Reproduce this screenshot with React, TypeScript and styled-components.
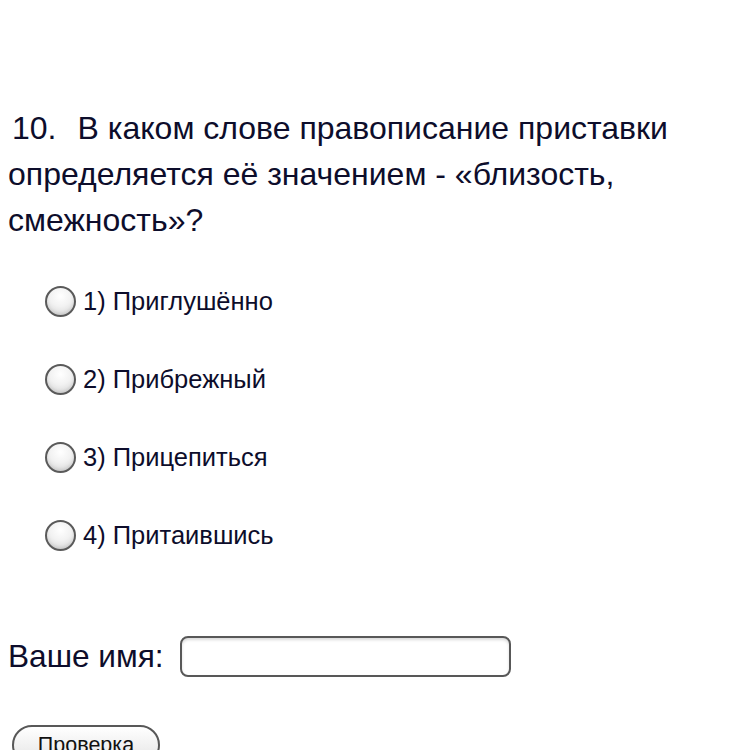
import React from "react";
import styled, { createGlobalStyle } from "styled-components";

const GlobalStyle = createGlobalStyle`
  html, body {
    margin: 0;
    padding: 0;
    background: #ffffff;
    overflow: hidden;
  }
  body {
    font-family: "Liberation Sans", Arial, sans-serif;
    color: #0d0d2b;
  }
`;

const Page = styled.div`
  width: 750px;
  height: 750px;
  padding: 105px 0 0 8px;
  box-sizing: border-box;
`;

const Question = styled.p`
  margin: 0;
  width: 725px;
  font-size: 32px;
  line-height: 46px;
`;

const Number = styled.span`
  margin-left: 4px;
  margin-right: 21px;
`;

const Options = styled.div`
  display: flex;
  flex-direction: column;
  gap: 47px;
  margin-top: 43px;
  padding-left: 37px;
`;

const Option = styled.label`
  display: flex;
  align-items: center;
  gap: 7px;
  height: 31px;
  font-size: 25.5px;
`;

const Radio = styled.span`
  width: 27px;
  height: 27px;
  border-radius: 50%;
  border: 2px solid #5a5a5a;
  background: radial-gradient(circle at 50% 30%, #ffffff 0%, #f2f2f2 45%, #cfcfcf 100%);
  box-shadow: inset 0 -2px 3px rgba(0, 0, 0, 0.08);
`;

const NameRow = styled.div`
  display: flex;
  align-items: center;
  gap: 16px;
  margin-top: 85px;
  font-size: 31.6px;
`;

const NameInput = styled.input`
  width: 331px;
  height: 41px;
  box-sizing: border-box;
  border: 2px solid #585858;
  border-radius: 8px;
  box-shadow: inset 0 2px 3px rgba(0, 0, 0, 0.15);
  outline: none;
`;

const CheckButton = styled.button`
  margin: 48px 0 0 4px;
  width: 148px;
  height: 40px;
  border: 2px solid #585858;
  border-radius: 20px;
  background: linear-gradient(#ffffff, #e4e4e4);
  font-family: "Liberation Sans", Arial, sans-serif;
  font-size: 21.5px;
  color: #111;
  padding: 6px 0 0;
  display: flex;
  justify-content: center;
  align-items: flex-start;
`;

const answers = ["1) Приглушённо", "2) Прибрежный", "3) Прицепиться", "4) Притаившись"];

export default function App() {
  return (
    <Page>
      <GlobalStyle />
      <Question>
        <Number>10.</Number>В каком слове правописание приставки определяется её значением - «близость, смежность»?
      </Question>
      <Options>
        {answers.map((a) => (
          <Option key={a}>
            <Radio />
            {a}
          </Option>
        ))}
      </Options>
      <NameRow>
        Ваше имя:
        <NameInput type="text" />
      </NameRow>
      <CheckButton>Проверка</CheckButton>
    </Page>
  );
}
